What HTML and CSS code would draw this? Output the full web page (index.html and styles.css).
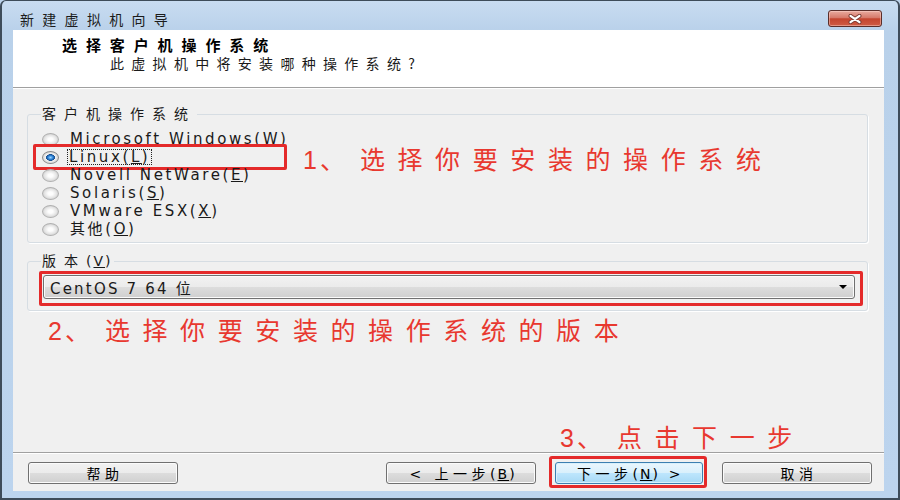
FILE: index.html
```html
<!DOCTYPE html>
<html lang="zh-CN">
  <head>
    <meta charset="UTF-8">
    <title>新建虚拟机向导</title>
    <link rel="stylesheet" href="styles.css">
  </head>
  <body>
    <div class="wizard">
      <div class="wizard-titlebar">
        <span class="wizard-caption">新建虚拟机向导</span>
        <button class="wizard-close" aria-label="关闭">
          <svg width="16" height="10" viewBox="0 0 16 10">
            <path d="M3.5 1.8 L12.5 8.2 M12.5 1.8 L3.5 8.2" stroke="#7a3b33" stroke-width="4" stroke-linecap="round"/>
            <path d="M3.5 1.8 L12.5 8.2 M12.5 1.8 L3.5 8.2" stroke="#fff" stroke-width="2.2" stroke-linecap="round"/>
          </svg>
        </button>
      </div>

      <div class="wizard-header">
        <div class="wizard-title">选择客户机操作系统</div>
        <div class="wizard-subtitle">此虚拟机中将安装哪种操作系统?</div>
      </div>

      <div class="wizard-body">
        <fieldset class="group group-os">
          <legend>客户机操作系统</legend>
          <label class="radio"><span class="radio-dot"></span><span class="radio-text">Microsoft Windows(<u>W</u>)</span></label>
          <label class="radio is-checked is-marked">
            <span class="radio-dot"></span><span class="radio-text has-focus">Linux(<u>L</u>)</span>
            <span class="mark-box"></span>
            <span class="note note-os"><span class="note-num">1、</span>选择你要安装的操作系统</span>
          </label>
          <label class="radio"><span class="radio-dot"></span><span class="radio-text">Novell NetWare(<u>E</u>)</span></label>
          <label class="radio"><span class="radio-dot"></span><span class="radio-text">Solaris(<u>S</u>)</span></label>
          <label class="radio"><span class="radio-dot"></span><span class="radio-text">VMware ESX(<u>X</u>)</span></label>
          <label class="radio"><span class="radio-dot"></span><span class="radio-text">其他(<u>O</u>)</span></label>
        </fieldset>

        <fieldset class="group group-version">
          <legend>版本<span class="key">(<u>V</u>)</span></legend>
          <div class="combo">
            <span class="combo-value">CentOS 7 64 位</span>
            <span class="combo-arrow"></span>
          </div>
        </fieldset>

        <div class="note note-version"><span class="note-num">2、</span>选择你要安装的操作系统的版本</div>
        <div class="note note-next"><span class="note-num">3、</span>点击下一步</div>
      </div>

      <div class="wizard-footer">
        <button class="btn btn-help">帮助</button>
        <button class="btn">&lt; 上一步<span class="key">(<u>B</u>)</span></button>
        <button class="btn btn-next">下一步<span class="key">(<u>N</u>)</span> &gt;</button>
        <button class="btn">取消</button>
      </div>
    </div>
  </body>
</html>
```

FILE: styles.css
```css
html, body {
  margin: 0;
  height: 100%;
}
body {
  overflow: hidden;
  background: #bcd3ec;
  font-family: "DejaVu Sans", "Noto Sans CJK SC", sans-serif;
  color: #1a1a1a;
}

/* window frame */
.wizard {
  box-sizing: border-box;
  width: 900px;
  height: 500px;
  display: flex;
  flex-direction: column;
  padding: 0 14px 7px 11px;
  border: 2px solid #3e4c5a;
  border-top-width: 1px;
  border-radius: 6px 6px 0 0;
  background: linear-gradient(#c8dcf1, #b9d1ea 30px, #bcd4ee);
}
.wizard-titlebar {
  height: 29px;
  box-sizing: border-box;
  display: flex;
  align-items: center;
  padding: 6px 2px 0 7px;
}
.wizard-caption {
  font-family: "Noto Sans CJK SC", sans-serif;
  font-size: 14px;
  line-height: 18px;
  letter-spacing: 8.3px;
  color: #1b1b1b;
}
.wizard-close {
  margin-left: auto;
  width: 54px;
  height: 17px;
  padding: 0;
  display: flex;
  align-items: center;
  justify-content: center;
  border: 1px solid #5a2e2a;
  border-radius: 3px;
  background: linear-gradient(#e9ab9f, #d6796a 45%, #c4452f 52%, #cf5c45);
  box-shadow: inset 0 0 0 1px rgba(255, 220, 210, 0.45);
}

/* header */
.wizard-header {
  box-sizing: border-box;
  height: 58px;
  padding: 6px 0 0 49px;
  background: #fff;
  border-bottom: 1px solid #a0a0a0;
}
.wizard-title {
  font-family: "Noto Sans CJK SC", sans-serif;
  font-size: 15px;
  font-weight: bold;
  line-height: 18px;
  letter-spacing: 8.9px;
  color: #000;
}
.wizard-subtitle {
  margin-left: 48px;
  font-family: "Noto Sans CJK SC", sans-serif;
  font-size: 14px;
  line-height: 18px;
  letter-spacing: 7.3px;
}

/* body */
.wizard-body {
  flex: 1;
  display: flex;
  flex-direction: column;
  padding: 17px 16px 0 14px;
  background: #f0f0f0;
  box-shadow: inset 0 1px #fff;
}
.group {
  margin: 0;
  min-width: 0;
  padding: 7px 0 4px;
  border: 1px solid #d6dde3;
  border-radius: 3px;
  box-shadow: 1px 1px 0 #fff;
}
.group legend {
  margin-left: 13px;
  padding: 0 1px;
  font-size: 14px;
  line-height: 18px;
  letter-spacing: 8px;
}
.group-version {
  margin-top: 9px;
  padding: 5px 0 11px;
}
.key {
  letter-spacing: 2px;
}

.radio {
  position: relative;
  display: flex;
  align-items: center;
  gap: 11px;
  height: 18px;
  padding-left: 14px;
}
.radio-dot {
  box-sizing: border-box;
  width: 17px;
  height: 13px;
  border: 1px solid #b0b0b0;
  border-radius: 50%;
  background: radial-gradient(closest-side, #fdfdfd 30%, #e4e4e4 80%, #d4d4d4);
}
.is-checked .radio-dot {
  border-color: #8a8a8a;
  background: radial-gradient(closest-side, #9ad6ff 0, #2b80d6 35%, #174f8e 56%, #f2f2f2 64%, #d8d8d8);
}
.radio-text {
  font-size: 15px;
  line-height: 18px;
  letter-spacing: 2.6px;
  white-space: nowrap;
}
.has-focus {
  margin-left: -2px;
  padding: 0 1px;
  line-height: 14px;
  outline: 1px dotted #222;
}

.combo {
  position: relative;
  box-sizing: border-box;
  height: 24px;
  margin: 0 12px 0 15px;
  padding-left: 6px;
  display: flex;
  align-items: center;
  border: 1px solid #707070;
  border-radius: 3px;
  background: linear-gradient(#f2f2f2, #ebebeb 50%, #dddddd 50%, #cfcfcf);
  box-shadow: inset 0 0 0 1px #fbfbfb;
}
.combo-value {
  font-size: 15px;
  letter-spacing: 2.2px;
}
.combo-arrow {
  margin-left: auto;
  margin-right: 7px;
  width: 0;
  height: 0;
  border-left: 4px solid transparent;
  border-right: 4px solid transparent;
  border-top: 4px solid #000;
}

/* red annotations */
.mark-box,
.combo::after {
  position: absolute;
  box-sizing: border-box;
  border: 3px solid #e42a2a;
  border-radius: 2px;
}
.mark-box {
  left: 5px;
  top: -4px;
  width: 254px;
  height: 26px;
}
.combo::after {
  content: "";
  inset: -5px -9px -8px -5px;
}
.note {
  font-family: "Liberation Sans", "Noto Sans CJK SC", sans-serif;
  font-size: 25px;
  line-height: 28px;
  letter-spacing: 12.6px;
  color: #e8382f;
  white-space: nowrap;
}
.note-num {
  margin-right: 12px;
  letter-spacing: 3px;
}
.note-os {
  position: absolute;
  left: 275px;
  top: -2px;
}
.note-version {
  margin: 6px 0 0 21px;
}
.note-next {
  margin: auto 0 0 533px;
}

/* footer */
.wizard-footer {
  display: flex;
  gap: 19px;
  padding: 9px 12px 7px 15px;
  background: #f0f0f0;
  border-top: 1px solid #a0a0a0;
  box-shadow: inset 0 1px #fff;
}
.btn {
  box-sizing: border-box;
  width: 150px;
  height: 22px;
  padding: 0 0 0 4px;
  border: 1px solid #707070;
  border-radius: 3px;
  background: linear-gradient(#f2f2f2, #ebebeb 50%, #dddddd 50%, #cfcfcf);
  box-shadow: inset 0 0 0 1px #fbfbfb;
  font-family: "DejaVu Sans", "Noto Sans CJK SC", sans-serif;
  font-size: 14px;
  letter-spacing: 4.5px;
  color: #000;
}
.btn-help {
  margin-right: auto;
}
.btn-next {
  position: relative;
  width: 148px;
  border-color: #3c7fb1;
  background: linear-gradient(#eaf6fd, #d9f0fc 50%, #bee6fd 50%, #a7d9f5);
  box-shadow: inset 0 0 0 1px #d8f0fc;
}
.btn-next::after {
  content: "";
  position: absolute;
  inset: -7px -5px -5px -7px;
  border: 3px solid #e42a2a;
  border-radius: 3px;
}
```
